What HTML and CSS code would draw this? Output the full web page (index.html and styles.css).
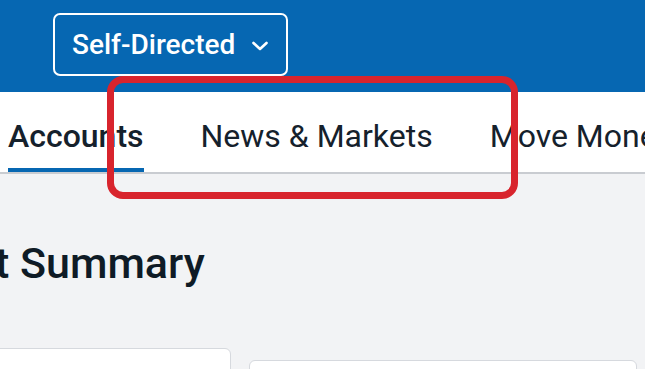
FILE: index.html
```html
<!DOCTYPE html>
<html lang="en">
<head>
<meta charset="utf-8">
<title>Account Summary</title>
<link rel="stylesheet" href="styles.css">
</head>
<body>
<header class="topbar">
  <button class="account-type" type="button">
    <span class="account-type-label">Self-Directed</span>
    <svg class="chevron" width="18" height="10" viewBox="0 0 18 10" aria-hidden="true">
      <polyline points="2.5,2 9,8 15.5,2" fill="none" stroke="#ffffff" stroke-width="2.6" stroke-linecap="round" stroke-linejoin="round"/>
    </svg>
  </button>
</header>
<nav class="tabs">
  <a class="tab tab-active" href="#">Accounts</a>
  <a class="tab" href="#">News &amp; Markets</a>
  <a class="tab" href="#">Move Money</a>
</nav>
<main class="content">
  <h1 class="page-title">t Summary</h1>
  <div class="cards">
    <section class="card card-primary"></section>
    <section class="card card-secondary"></section>
  </div>
</main>
<div class="highlight" aria-hidden="true"></div>
</body>
</html>
```
FILE: styles.css
```css
html, body {
  margin: 0;
  padding: 0;
}
body {
  width: 645px;
  height: 369px;
  overflow: hidden;
  background: #f2f3f5;
  font-family: Roboto, "Noto Sans", "Liberation Sans", sans-serif;
  color: #15212c;
  position: relative;
}
.topbar {
  height: 92px;
  box-sizing: border-box;
  background: #0667b2;
  padding: 13px 0 0 53px;
}
.account-type {
  display: flex;
  align-items: center;
  gap: 16px;
  width: 235px;
  height: 63px;
  box-sizing: border-box;
  padding: 0 0 0 17px;
  margin: 0;
  background: transparent;
  border: 2px solid #ffffff;
  border-radius: 7px;
  color: #ffffff;
  font-family: inherit;
  font-size: 28px;
  font-weight: 500;
  cursor: pointer;
}
.account-type-label {
  line-height: 1;
}
.chevron {
  display: block;
  margin-top: 2px;
}
.tabs {
  display: flex;
  gap: 57px;
  height: 82px;
  box-sizing: border-box;
  padding-left: 8px;
  background: #ffffff;
  border-bottom: 2px solid #c9ccd1;
  white-space: nowrap;
}
.tab {
  display: block;
  padding: 25px 0 13px;
  line-height: 38px;
  font-size: 32px;
  font-weight: 400;
  color: #15212c;
  text-decoration: none;
  border-bottom: 4px solid transparent;
}
.tab-active {
  border-bottom-color: #0667b2;
  font-weight: 500;
}
.content {
  padding-top: 64px;
}
.page-title {
  margin: 0 0 0 -5px;
  font-size: 43px;
  line-height: 50px;
  font-weight: 500;
  color: #0f1b26;
}
.cards {
  display: flex;
  align-items: flex-start;
  gap: 18px;
  margin-top: 60px;
  margin-left: -10px;
}
.card {
  background: #ffffff;
  border: 1px solid #d6d9de;
  border-radius: 6px;
  height: 80px;
  box-sizing: border-box;
}
.card-primary {
  width: 241px;
}
.card-secondary {
  width: 388px;
  margin-top: 12px;
}
.highlight {
  position: absolute;
  left: 107px;
  top: 76px;
  width: 411px;
  height: 123px;
  box-sizing: border-box;
  border: 7px solid #d8242d;
  border-radius: 16px;
  pointer-events: none;
}
```
